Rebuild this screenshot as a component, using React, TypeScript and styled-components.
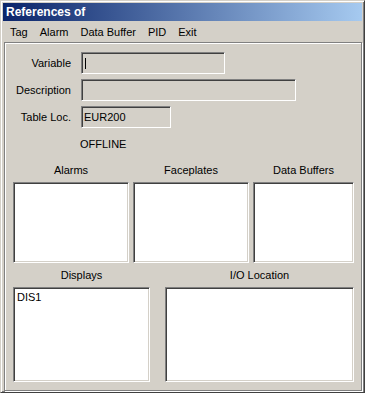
import React from "react";
import styled, { createGlobalStyle } from "styled-components";

const GlobalStyle = createGlobalStyle`
  html, body {
    margin: 0;
    padding: 0;
    background: #d4d0c8;
  }
  * {
    box-sizing: border-box;
  }
`;

const StyledWindow = styled.div`
  display: flex;
  flex-direction: column;
  width: 365px;
  height: 393px;
  padding: 1px;
  background: #d4d0c8;
  border-style: solid;
  border-width: 1px;
  border-color: #d4d0c8 #404040 #404040 #d4d0c8;
  box-shadow: inset 1px 1px #ffffff, inset -1px -1px #808080;
  font-family: "Liberation Sans", Arial, sans-serif;
  font-size: 11px;
  color: #000;
`;

const StyledTitleBar = styled.div`
  display: flex;
  align-items: center;
  height: 18px;
  margin: 1px 1px 0 1px;
  padding-left: 3px;
  background: linear-gradient(to right, #0a246a, #a6caf0);
  color: #fff;
  font-weight: 700;
  font-size: 12px;
`;

const StyledMenuBar = styled.div`
  display: flex;
  align-items: center;
  height: 20px;
  padding: 2px 0 0 2px;
`;

const StyledMenuItem = styled.span`
  padding: 0 6px;
`;

const StyledClient = styled.div`
  flex: 1;
  display: flex;
  flex-direction: column;
  margin: 1px 1px 0 2px;
  padding: 9px 7px 0 8px;
  border: 1px solid #808080;
  box-shadow: inset 1px 1px #ffffff, 1px 1px #ffffff;
`;

const StyledFields = styled.div`
  display: flex;
  flex-direction: column;
  gap: 5px;
`;

const StyledFieldRow = styled.div`
  display: flex;
  align-items: center;
  height: 22px;
`;

const StyledFieldLabel = styled.span`
  width: 58px;
  margin-right: 10px;
  text-align: right;
  white-space: nowrap;
`;

const StyledInput = styled.div<{ $width: number }>`
  display: flex;
  align-items: center;
  width: ${(p) => p.$width}px;
  height: 22px;
  padding-left: 2px;
  background: #d4d0c8;
  border-style: solid;
  border-width: 1px;
  border-color: #808080 #ffffff #ffffff #808080;
  box-shadow: inset 1px 1px #404040, inset -1px -1px #d4d0c8;
`;

const StyledCaret = styled.span`
  width: 1px;
  height: 11px;
  margin-left: 1px;
  background: #000;
`;

const StyledStatus = styled.div`
  height: 13px;
  line-height: 13px;
  margin-top: 10px;
  margin-left: 67px;
`;

const StyledListGrid = styled.div<{ $columns: string; $gap: number; $top: number }>`
  display: grid;
  grid-template-columns: ${(p) => p.$columns};
  column-gap: ${(p) => p.$gap}px;
  margin-top: ${(p) => p.$top}px;
`;

const StyledListColumn = styled.div`
  display: flex;
  flex-direction: column;
`;

const StyledListLabel = styled.div`
  height: 13px;
  line-height: 13px;
  margin-bottom: 5px;
  text-align: center;
`;

const StyledListBox = styled.div<{ $height: number }>`
  height: ${(p) => p.$height}px;
  padding: 3px 3px;
  background: #ffffff;
  border-style: solid;
  border-width: 1px;
  border-color: #808080 #ffffff #ffffff #808080;
  box-shadow: inset 1px 1px #404040, inset -1px -1px #d4d0c8;
  line-height: 13px;
`;

const menuItems = ["Tag", "Alarm", "Data Buffer", "PID", "Exit"];

interface ListProps {
  label: string;
  height: number;
  items?: string[];
}

const ListField = ({ label, height, items = [] }: ListProps) => (
  <StyledListColumn>
    <StyledListLabel>{label}</StyledListLabel>
    <StyledListBox $height={height}>
      {items.map((item) => (
        <div key={item}>{item}</div>
      ))}
    </StyledListBox>
  </StyledListColumn>
);

const App = () => {
  return (
    <>
      <GlobalStyle />
      <StyledWindow>
        <StyledTitleBar>References of</StyledTitleBar>
        <StyledMenuBar>
          {menuItems.map((item) => (
            <StyledMenuItem key={item}>{item}</StyledMenuItem>
          ))}
        </StyledMenuBar>
        <StyledClient>
          <StyledFields>
            <StyledFieldRow>
              <StyledFieldLabel>Variable</StyledFieldLabel>
              <StyledInput $width={144}>
                <StyledCaret />
              </StyledInput>
            </StyledFieldRow>
            <StyledFieldRow>
              <StyledFieldLabel>Description</StyledFieldLabel>
              <StyledInput $width={215} />
            </StyledFieldRow>
            <StyledFieldRow>
              <StyledFieldLabel>Table Loc.</StyledFieldLabel>
              <StyledInput $width={90}>EUR200</StyledInput>
            </StyledFieldRow>
          </StyledFields>
          <StyledStatus>OFFLINE</StyledStatus>
          <StyledListGrid $columns="116px 116px 101px" $gap={4} $top={13}>
            <ListField label="Alarms" height={81} />
            <ListField label="Faceplates" height={81} />
            <ListField label="Data Buffers" height={81} />
          </StyledListGrid>
          <StyledListGrid $columns="137px 189px" $gap={15} $top={6}>
            <ListField label="Displays" height={95} items={["DIS1"]} />
            <ListField label="I/O Location" height={95} />
          </StyledListGrid>
        </StyledClient>
      </StyledWindow>
    </>
  );
};

export default App;
